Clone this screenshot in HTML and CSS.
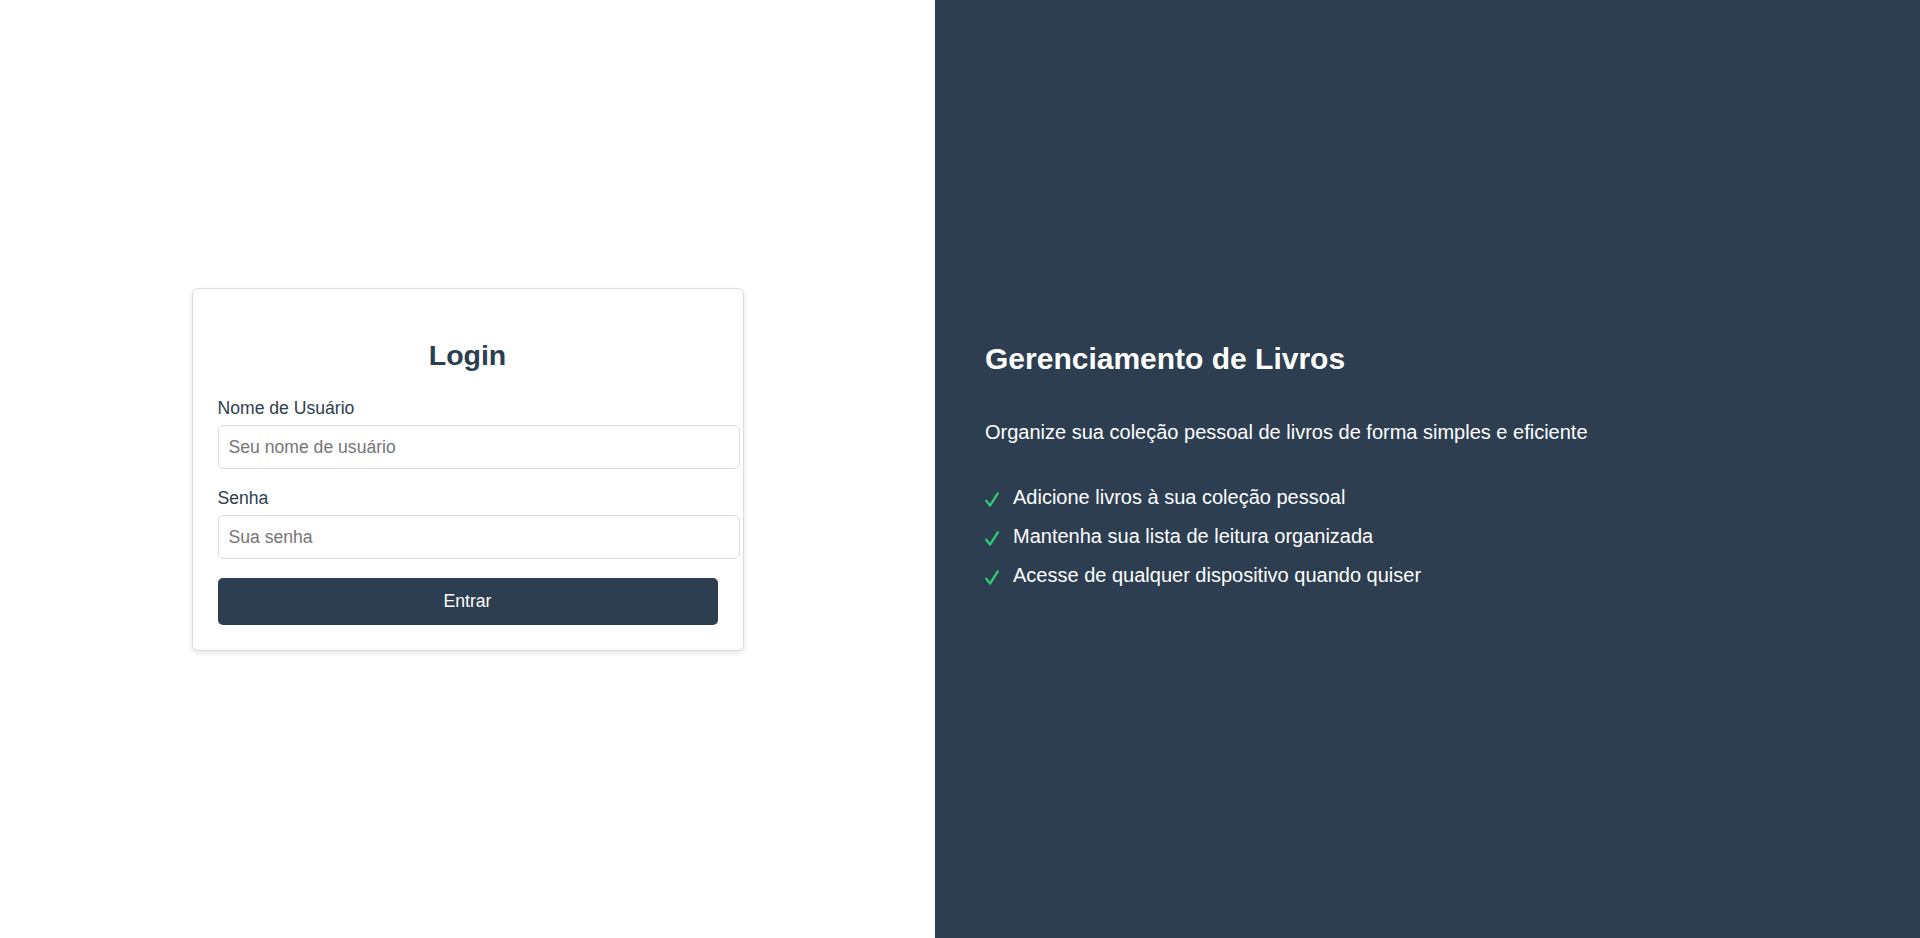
FILE: index.html
```html
<!DOCTYPE html>
<html lang="pt-BR">
<head>
<meta charset="utf-8">
<title>Login - Gerenciamento de Livros</title>
<link rel="stylesheet" href="styles.css">
</head>
<body>
<div class="page">
  <div class="left">
    <div class="card">
      <h2 class="card-title">Login</h2>
      <form class="form">
        <div class="group">
          <label class="label" for="u">Nome de Usuário</label>
          <input class="input" id="u" type="text" placeholder="Seu nome de usuário">
        </div>
        <div class="group">
          <label class="label" for="p">Senha</label>
          <input class="input" id="p" type="password" placeholder="Sua senha">
        </div>
        <button class="btn" type="button">Entrar</button>
      </form>
    </div>
  </div>
  <div class="right">
    <div class="info">
      <h1 class="info-title">Gerenciamento de Livros</h1>
      <p class="info-sub">Organize sua coleção pessoal de livros de forma simples e eficiente</p>
      <ul class="features">
        <li class="feature"><svg class="check" viewBox="0 0 14 15" width="14" height="15"><path d="M1.2 8.6 L5 13.6 L12.8 1.4" fill="none" stroke="#2ecc71" stroke-width="2.3" stroke-linecap="round" stroke-linejoin="round"/></svg><span>Adicione livros à sua coleção pessoal</span></li>
        <li class="feature"><svg class="check" viewBox="0 0 14 15" width="14" height="15"><path d="M1.2 8.6 L5 13.6 L12.8 1.4" fill="none" stroke="#2ecc71" stroke-width="2.3" stroke-linecap="round" stroke-linejoin="round"/></svg><span>Mantenha sua lista de leitura organizada</span></li>
        <li class="feature"><svg class="check" viewBox="0 0 14 15" width="14" height="15"><path d="M1.2 8.6 L5 13.6 L12.8 1.4" fill="none" stroke="#2ecc71" stroke-width="2.3" stroke-linecap="round" stroke-linejoin="round"/></svg><span>Acesse de qualquer dispositivo quando quiser</span></li>
      </ul>
    </div>
  </div>
</div>
</body>
</html>
```

FILE: styles.css
```css
* { box-sizing: content-box; }
html, body {
  margin: 0;
  padding: 0;
  height: 100%;
}
body {
  font-family: "Liberation Sans", Arial, sans-serif;
  color: #2c3e50;
  background: #ffffff;
}
.page {
  display: flex;
  height: 938px;
}
.left {
  width: 935px;
  flex: none;
  display: flex;
  align-items: center;
  justify-content: center;
  background: #ffffff;
}
.card {
  width: 500px;
  padding: 25px;
  border: 1px solid #dcdcdc;
  border-radius: 6px;
  background: #fff;
  box-shadow: 0 2px 5px rgba(0, 0, 0, 0.1);
}
.card-title {
  margin: 25px 0 26px;
  text-align: center;
  font-size: 28.5px;
  font-weight: bold;
  line-height: 33px;
  color: #2c3e50;
}
.form { margin: 0; }
.group { margin-bottom: 19px; }
.label {
  display: block;
  margin-bottom: 7px;
  font-size: 17.6px;
  line-height: 20px;
  color: #2c3e50;
}
.input {
  display: block;
  width: 100%;
  height: 20px;
  padding: 11px 10px;
  margin: 0;
  border: 1px solid #dcdcdc;
  border-radius: 5px;
  font-family: "Liberation Sans", Arial, sans-serif;
  font-size: 17.6px;
  line-height: 20px;
  color: #2c3e50;
  background: #fff;
  outline: none;
}
.input::placeholder { color: #767676; }
.btn {
  display: block;
  box-sizing: border-box;
  width: 100%;
  height: 47px;
  padding: 0;
  margin: 0;
  border: none;
  border-radius: 5px;
  background: #2c3e50;
  color: #fff;
  font-family: "Liberation Sans", Arial, sans-serif;
  font-size: 17.6px;
  cursor: pointer;
}
.right {
  flex: 1;
  background: #2c3e50;
  color: #fff;
  display: flex;
  flex-direction: column;
  justify-content: center;
  padding-left: 50px;
}
.info-title {
  margin: 0 0 44.5px;
  font-size: 30px;
  font-weight: bold;
  line-height: normal;
}
.info-sub {
  margin: 0 0 42px;
  font-size: 20px;
  line-height: normal;
}
.features {
  list-style: none;
  margin: 0 0 9.5px;
  padding: 0;
}
.feature {
  display: flex;
  align-items: baseline;
  font-size: 20px;
  line-height: normal;
}
.feature + .feature { margin-top: 16px; }
.check {
  flex: none;
  margin-right: 14px;
  position: relative;
  top: 3px;
}
```
